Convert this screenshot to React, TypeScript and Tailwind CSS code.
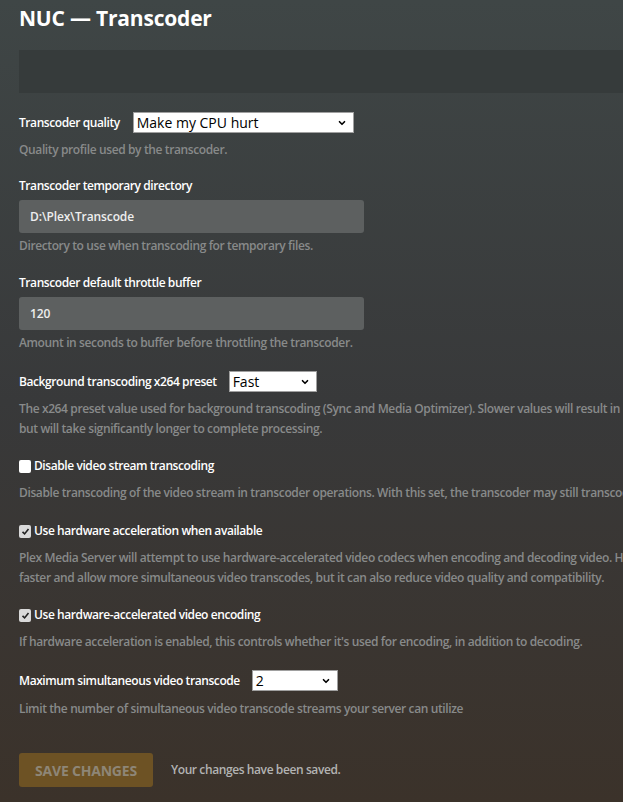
import { ChevronDown } from 'lucide-react'

const font = { fontFamily: '"Open Sans", "Noto Sans", sans-serif' }

function Select({ value, width }: { value: string; width: string }) {
  return (
    <div className={`${width} h-[21px] bg-white border border-[#a0a0a0] flex items-center justify-between pl-[3px] pr-[6px] text-[14px] leading-none text-black`}>
      <span>{value}</span>
      <ChevronDown className="w-[10px] h-[10px] text-black" strokeWidth={4} />
    </div>
  )
}

function Checkbox({ checked }: { checked: boolean }) {
  return (
    <span className={`w-[12px] h-[13px] rounded-[2px] flex items-center justify-center shrink-0 ${checked ? 'bg-[#d9d9d9]' : 'bg-white'}`}>
      {checked && (
        <svg viewBox="0 0 12 12" className="w-[9px] h-[9px]">
          <path d="M2 6.5 L4.8 9.2 L10 2.8" fill="none" stroke="#222" strokeWidth="2.2" />
        </svg>
      )}
    </span>
  )
}

function Help({ children }: { children: React.ReactNode }) {
  return <p className="text-[12px] leading-[20px] tracking-[-0.38px] text-[#888a8a] font-semibold whitespace-nowrap">{children}</p>
}

function Label({ children }: { children: React.ReactNode }) {
  return <div className="text-[12px] leading-[20px] tracking-[-0.42px] font-semibold text-white whitespace-nowrap">{children}</div>
}

function TextInput({ value }: { value: string }) {
  return (
    <div className="mt-[4px] w-[345px] h-[33px] rounded-[3px] bg-[#5d6060] flex items-center px-[11px] text-[12px] tracking-[-0.1px] font-semibold text-[#eeeeee]">
      {value}
    </div>
  )
}

export default function App() {
  return (
    <div className="w-full h-[802px] overflow-hidden bg-linear-to-b from-[#3f4646] via-[#38393a] to-[#3b322a]" style={font}>
      <div className="w-[900px] pl-[19px] pt-[6px]">
        <h1 className="text-[21px] leading-[24px] font-bold text-white tracking-[-0.2px]">NUC — Transcoder</h1>
        <div className="mt-[20px] h-[43px] bg-[#363b3b]" />

        <div className="mt-[19px] flex items-center gap-[13px]">
          <Label>Transcoder quality</Label>
          <Select value="Make my CPU hurt" width="w-[221px]" />
        </div>
        <div className="mt-[7px]"><Help>Quality profile used by the transcoder.</Help></div>

        <div className="mt-[16px]"><Label>Transcoder temporary directory</Label></div>
        <TextInput value="D:\Plex\Transcode" />
        <div className="mt-[3px]"><Help>Directory to use when transcoding for temporary files.</Help></div>

        <div className="mt-[17px]"><Label>Transcoder default throttle buffer</Label></div>
        <TextInput value="120" />
        <div className="mt-[3px]"><Help>Amount in seconds to buffer before throttling the transcoder.</Help></div>

        <div className="mt-[18px] flex items-center gap-[12px]">
          <Label>Background transcoding x264 preset</Label>
          <Select value="Fast" width="w-[88px]" />
        </div>
        <div className="mt-[7px]">
          <Help>The x264 preset value used for background transcoding (Sync and Media Optimizer). Slower values will result in better video quality and smaller file sizes,</Help>
          <Help>but will take significantly longer to complete processing.</Help>
        </div>

        <div className="mt-[17px] flex items-center gap-[3px]">
          <Checkbox checked={false} />
          <Label>Disable video stream transcoding</Label>
        </div>
        <div className="mt-[7px]"><Help>Disable transcoding of the video stream in transcoder operations. With this set, the transcoder may still transcode the audio stream.</Help></div>

        <div className="mt-[18px] flex items-center gap-[3px]">
          <Checkbox checked />
          <Label>Use hardware acceleration when available</Label>
        </div>
        <div className="mt-[7px]">
          <Help>Plex Media Server will attempt to use hardware-accelerated video codecs when encoding and decoding video. Hardware acceleration can make transcoding</Help>
          <Help>faster and allow more simultaneous video transcodes, but it can also reduce video quality and compatibility.</Help>
        </div>

        <div className="mt-[17px] flex items-center gap-[3px]">
          <Checkbox checked />
          <Label>Use hardware-accelerated video encoding</Label>
        </div>
        <div className="mt-[7px]"><Help>If hardware acceleration is enabled, this controls whether it's used for encoding, in addition to decoding.</Help></div>

        <div className="mt-[18px] flex items-center gap-[12px]">
          <Label>Maximum simultaneous video transcode</Label>
          <Select value="2" width="w-[86px]" />
        </div>
        <div className="mt-[8px]"><Help>Limit the number of simultaneous video transcode streams your server can utilize</Help></div>

        <div className="mt-[34px] flex items-center gap-[18px]">
          <button className="w-[134px] h-[34px] rounded-[3px] bg-[#6d5224] text-[14px] font-bold uppercase text-[#8e8677] tracking-[-0.2px]">
            Save Changes
          </button>
          <span className="text-[12px] tracking-[-0.4px] font-semibold text-[#b3b3b3]">Your changes have been saved.</span>
        </div>
      </div>
    </div>
  )
}
